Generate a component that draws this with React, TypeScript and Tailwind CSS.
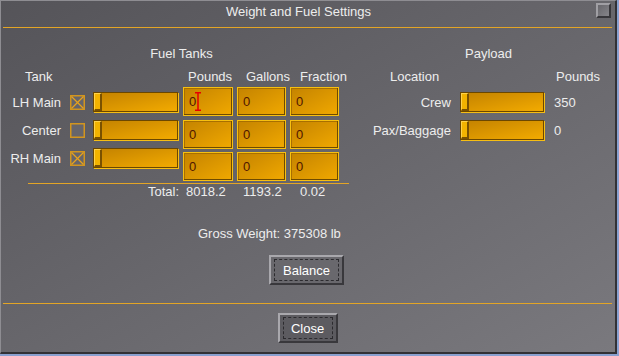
import type { FC, ReactNode } from "react";

const font = { fontFamily: '"Liberation Sans", Arial, sans-serif' };

const CheckBox: FC<{ checked?: boolean }> = ({ checked }) => (
  <svg width="15" height="15" viewBox="0 0 15 15" className="shrink-0">
    <rect x="0.75" y="0.75" width="13.5" height="13.5" fill="#66656b" stroke="#d2951e" strokeWidth="1.5" />
    {checked && (
      <>
        <line x1="1.5" y1="1.5" x2="13.5" y2="13.5" stroke="#e8a21c" strokeWidth="1.3" />
        <line x1="13.5" y1="1.5" x2="1.5" y2="13.5" stroke="#e8a21c" strokeWidth="1.3" />
      </>
    )}
  </svg>
);

const Slider: FC<{ width: string }> = ({ width }) => (
  <div
    className={`flex h-[20px] shrink-0 border border-[#6b4700] bg-linear-to-br from-[#c38200] to-[#f3ab00] shadow-[1px_1px_0_#f6be14] ${width}`}
  >
    <div className="h-full w-[8px] border-t border-l border-r-2 border-b-2 border-t-[#ffd24a] border-l-[#ffd24a] border-r-[#7a5100] border-b-[#7a5100] bg-[#f3b300]" />
  </div>
);

const Field: FC<{ width: string; children?: ReactNode }> = ({ width, children }) => (
  <div
    className={`flex h-[29px] shrink-0 items-center border border-[#f7c010] bg-linear-to-br from-[#c48300] to-[#f1a900] pl-[5px] text-[13px] leading-[15px] text-[#4f1600] shadow-[inset_-1px_-1px_0_#6e4a00,inset_1px_1px_0_#a86f00] ${width}`}
  >
    {children ?? "0"}
  </div>
);

const GuiButton: FC<{ label: string; width: string; fill: string }> = ({ label, width, fill }) => (
  <button
    className={`flex h-[30px] items-center justify-center border-2 border-t-[#a9a8ad] border-l-[#a9a8ad] border-r-[#39383c] border-b-[#39383c] px-[3px] py-[2px] ${width} ${fill}`}
  >
    <span className="flex h-full w-full items-center justify-center border border-dashed border-[#2c2b2f] text-[13px] leading-[15px] text-white">
      {label}
    </span>
  </button>
);

const tanks = [
  { name: "LH Main", checked: true },
  { name: "Center", checked: false },
  { name: "RH Main", checked: true },
];

const payload = [
  { name: "Crew", value: "350" },
  { name: "Pax/Baggage", value: "0" },
];

export default function App() {
  return (
    <div className="h-[356px] w-[619px] bg-[#89a0cf]" style={font}>
      <div className="flex h-[354px] w-[617px] flex-col border-t border-l border-r-2 border-b-2 border-t-[#8e8d92] border-l-[#8e8d92] border-r-[#323135] border-b-[#323135] bg-linear-to-br from-[#555459] to-[#7a797e] text-[13px] leading-[15px] text-[#ededed]">
        {/* title bar */}
        <div className="flex h-[26px] items-start">
          <div className="mt-[3px] flex-1 text-center">Weight and Fuel Settings</div>
          <div className="mt-[2px] mr-[4px] h-[15px] w-[15px] border-2 border-t-[#a09fa4] border-l-[#a09fa4] border-r-[#38373b] border-b-[#38373b] bg-linear-to-br from-[#67666b] to-[#86858a]" />
        </div>
        <div className="mr-[3px] ml-[2px] h-px bg-[#e3a526]" />

        {/* main */}
        <div className="flex h-[275px] flex-col pt-[18px]">
          <div className="flex">
            {/* fuel tanks */}
            <div className="w-[361px]">
              <div className="text-center">Fuel Tanks</div>
              <div className="mt-[8px] flex items-start">
                <div>
                  <div className="pl-[24px]">Tank</div>
                  <div className="mt-[8px] flex flex-col gap-[8px]">
                    {tanks.map((t) => (
                      <div key={t.name} className="flex h-[20px] items-center">
                        <div className="w-[60px] text-right">{t.name}</div>
                        <div className="ml-[9px]">
                          <CheckBox checked={t.checked} />
                        </div>
                        <div className="ml-[8px]">
                          <Slider width="w-[85px]" />
                        </div>
                      </div>
                    ))}
                  </div>
                </div>
                <div className="ml-[5px]">
                  <div className="flex pl-[5px]">
                    <span className="w-[58px]">Pounds</span>
                    <span className="w-[54px]">Gallons</span>
                    <span>Fraction</span>
                  </div>
                  <div className="mt-[3px] flex gap-[4px]">
                    <Field width="w-[50px]">
                      <span>0</span>
                      <svg width="6" height="19" viewBox="0 0 6 19" className="-ml-[1px]">
                        <path d="M0 0.75H6M0 18.25H6M3 0.75V18.25" stroke="#e60000" strokeWidth="1.5" />
                      </svg>
                    </Field>
                    <Field width="w-[49px]" />
                    <Field width="w-[49px]" />
                  </div>
                  <div className="mt-[4px] flex gap-[4px]">
                    <Field width="w-[50px]" />
                    <Field width="w-[49px]" />
                    <Field width="w-[49px]" />
                  </div>
                  <div className="mt-[3px] flex gap-[4px]">
                    <Field width="w-[50px]" />
                    <Field width="w-[49px]" />
                    <Field width="w-[49px]" />
                  </div>
                </div>
              </div>
              <div className="mt-[2px] ml-[27px] h-px w-[321px] bg-[#e3a526]" />
              <div className="flex pl-[147px]">
                <span className="w-[38px]">Total:</span>
                <span className="w-[57px]">8018.2</span>
                <span className="w-[57px]">1193.2</span>
                <span>0.02</span>
              </div>
            </div>

            {/* payload */}
            <div className="flex-1">
              <div className="text-center">Payload</div>
              <div className="mt-[8px] flex pl-[28px]">
                <span className="w-[166px]">Location</span>
                <span>Pounds</span>
              </div>
              <div className="mt-[8px] flex flex-col gap-[8px]">
                {payload.map((p) => (
                  <div key={p.name} className="flex h-[20px] items-center">
                    <div className="w-[89px] text-right">{p.name}</div>
                    <div className="ml-[9px]">
                      <Slider width="w-[84px]" />
                    </div>
                    <div className="ml-[10px]">{p.value}</div>
                  </div>
                ))}
              </div>
            </div>
          </div>

          <div className="mt-[27px] pl-[197px]">Gross Weight: 375308 lb</div>
          <div className="mt-[14px] flex justify-center pr-[3px]">
            <GuiButton label="Balance" width="w-[75px]" fill="bg-[#69686d]" />
          </div>
        </div>

        <div className="mr-[3px] ml-[2px] h-px bg-[#e3a526]" />
        <div className="flex flex-1 items-center justify-center pr-[1px]">
          <GuiButton label="Close" width="w-[60px]" fill="bg-[#5c5b60]" />
        </div>
      </div>
    </div>
  );
}
